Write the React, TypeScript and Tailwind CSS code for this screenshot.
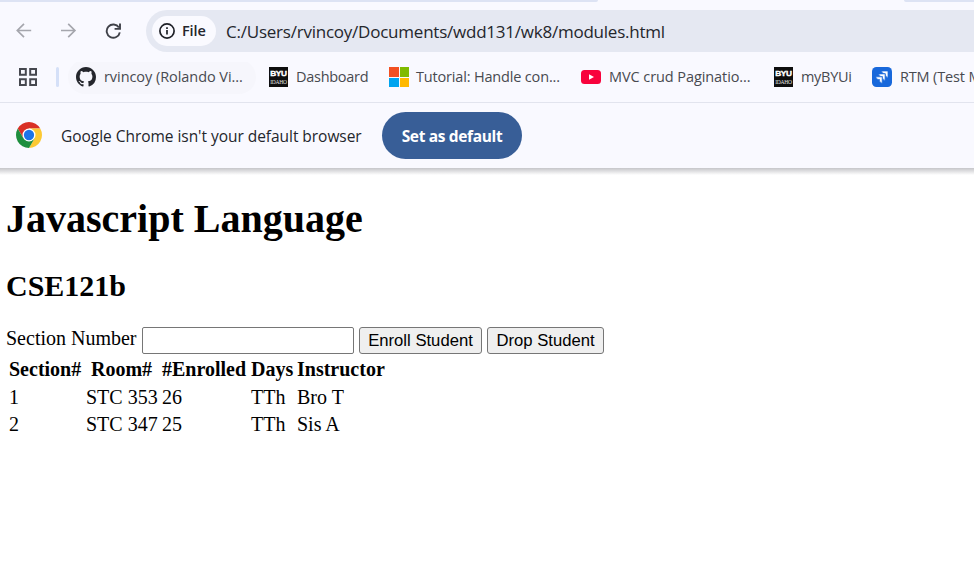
import type { ReactNode } from "react";

function Bookmark({ icon, label, className }: { icon: ReactNode; label: string; className: string }) {
  return (
    <div className={`flex h-[34px] shrink-0 items-center whitespace-nowrap text-[14.5px] text-[#484a50] ${className}`}>
      {icon}
      <span>{label}</span>
    </div>
  );
}

function ByuIcon() {
  return (
    <svg className="h-5 w-[19px] shrink-0" viewBox="0 0 19 20">
      <rect width="19" height="20" fill="#0e0e0e" />
      <text x="1.2" y="9" textLength="16.6" lengthAdjust="spacingAndGlyphs" fill="#fff" stroke="#fff" strokeWidth="0.4" fontSize="8" className="font-['Liberation_Sans',sans-serif] font-bold">BYU</text>
      <text x="1.2" y="16.8" textLength="16.6" lengthAdjust="spacingAndGlyphs" fill="#e0e0e0" fontSize="6.6" className="font-['Liberation_Serif',serif]">IDAHO</text>
    </svg>
  );
}

function GithubIcon() {
  return (
    <svg className="size-5 shrink-0" viewBox="0 0 16 16" fill="#24262c">
      <path d="M8 0C3.58 0 0 3.58 0 8c0 3.54 2.29 6.53 5.47 7.59.4.07.55-.17.55-.38 0-.19-.01-.82-.01-1.49-2.01.37-2.53-.49-2.69-.94-.09-.23-.48-.94-.82-1.13-.28-.15-.68-.52-.01-.53.63-.01 1.08.58 1.23.82.72 1.21 1.87.87 2.33.66.07-.52.28-.87.51-1.07-1.78-.2-3.64-.89-3.64-3.95 0-.87.31-1.59.82-2.15-.08-.2-.36-1.02.08-2.12 0 0 .67-.21 2.2.82.64-.18 1.32-.27 2-.27s1.36.09 2 .27c1.53-1.04 2.2-.82 2.2-.82.44 1.1.16 1.92.08 2.12.51.56.82 1.27.82 2.15 0 3.07-1.87 3.75-3.65 3.95.29.25.54.73.54 1.48 0 1.07-.01 1.93-.01 2.2 0 .21.15.46.55.38A8.01 8.01 0 0 0 16 8c0-4.42-3.58-8-8-8" />
    </svg>
  );
}

function ChromeIcon() {
  return (
    <svg className="-mt-px size-[26px] shrink-0" viewBox="0 0 48 48">
      <path fill="#d93025" d="M24 12h20.78A24 24 0 0 0 3.22 12L13.6 30Z" />
      <path fill="#fcc934" d="M34.4 30 24 48A24 24 0 0 0 44.78 12H24Z" />
      <path fill="#1e8e3e" d="M13.6 30 3.22 12A24 24 0 0 0 24 48l10.4-18Z" />
      <circle cx="24" cy="24" r="12" fill="#fff" />
      <circle cx="24" cy="24" r="9.5" fill="#1a73e8" />
    </svg>
  );
}

const rows = [
  ["1", "STC 353", "26", "TTh", "Bro T"],
  ["2", "STC 347", "25", "TTh", "Sis A"],
];

export default function App() {
  return (
    <div className="h-[583px] w-[974px] overflow-hidden bg-white text-black">
      <div className="bg-[#f9f9ff] font-['Open_Sans','Noto_Sans',sans-serif]">
        <div className="flex h-[2px] justify-between">
          <div className="h-[2px] w-[598px] rounded-br-[3px] bg-[#dde3f4]" />
          <div className="h-[2px] w-[70px] rounded-bl-[3px] bg-[#dde3f4]" />
        </div>
        <header className="flex h-[60px] items-start pt-2 pl-4">
          <svg className="mt-[13px] h-4 w-4 shrink-0" viewBox="0 0 16 16" fill="none" stroke="#a5a6ad" strokeWidth="1.7">
            <path d="M15.2 7.5H1.4M8 .8 1.3 7.5 8 14.2" />
          </svg>
          <svg className="mt-[13px] ml-[29px] h-4 w-4 shrink-0" viewBox="0 0 16 16" fill="none" stroke="#a5a6ad" strokeWidth="1.7">
            <path d="M0 7.5h13.8M7.2.8l6.7 6.7-6.7 6.7" />
          </svg>
          <svg className="mt-[13px] ml-7 h-4 w-4 shrink-0" viewBox="0 0 16 16" fill="none" stroke="#404249" strokeWidth="1.9">
            <path d="M13.9 4.6A6.6 6.6 0 1 0 14.8 9.3M15 .5v5.4H9.6" />
          </svg>
          <div className="ml-[25px] flex h-[42px] flex-1 items-center rounded-l-full bg-[#e5e8f2] pl-[6px]">
            <div className="flex h-[30px] w-16 items-center rounded-full bg-[#fafaff] pl-[7px]">
              <svg className="size-4" viewBox="0 0 16 16" fill="none" stroke="#1e2027" strokeWidth="1.7">
                <circle cx="8" cy="8" r="7.1" />
                <path d="M8 7v4.5M8 4.2v1.7" />
              </svg>
              <span className="-mt-px ml-[7px] text-[14.5px] font-semibold tracking-[-0.1px] text-[#24262c]">File</span>
            </div>
            <span className="mt-px ml-[10px] text-[17px] tracking-[-0.23px] whitespace-nowrap text-[#24262c]">
              C:/Users/rvincoy/Documents/wdd131/wk8/modules.html
            </span>
          </div>
        </header>
        <nav className="flex h-[41px] overflow-hidden border-b border-[#e2e4ee] pl-[19px]">
          <svg className="mt-[6px] h-[18px] w-[18px] shrink-0" viewBox="0 0 18 18" fill="none" stroke="#46484f" strokeWidth="2">
            <path d="M1 1h5.8v5.8H1zM11.2 1H17v5.8h-5.8zM1 11.2h5.8V17H1zM11.2 11.2H17V17h-5.8z" />
          </svg>
          <div className="mt-[5px] ml-[19px] h-5 w-[3px] shrink-0 rounded-full bg-[#d5e0f8]" />
          <Bookmark icon={<GithubIcon />} label="rvincoy (Rolando Vi..." className="-mt-[2px] ml-[9px] w-[188px] gap-2 rounded-full bg-[#f6f6fc] pl-2 tracking-[-0.06px]" />
          <Bookmark icon={<ByuIcon />} label="Dashboard" className="-mt-[2px] ml-[13px] w-[120px] gap-2 tracking-[-0.28px]" />
          <Bookmark
            icon={
              <span className="grid size-5 shrink-0 grid-cols-2 gap-px">
                <span className="bg-[#f25022]" />
                <span className="bg-[#7fba00]" />
                <span className="bg-[#00a4ef]" />
                <span className="bg-[#ffb900]" />
              </span>
            }
            label="Tutorial: Handle con..."
            className="-mt-[2px] w-[192px] gap-[7px] tracking-[-0.17px]"
          />
          <Bookmark
            icon={
              <svg className="h-[14px] w-5 shrink-0" viewBox="0 0 20 14">
                <rect width="20" height="14" rx="3.5" fill="#f8023c" />
                <path d="M8 4.2v5.6L13 7z" fill="#fff" />
              </svg>
            }
            label="MVC crud Paginatio..."
            className="-mt-[2px] w-[193px] gap-2 tracking-[-0.08px]"
          />
          <Bookmark icon={<ByuIcon />} label="myBYUi" className="-mt-[2px] w-[98px] gap-2 tracking-[-0.3px]" />
          <Bookmark
            icon={
              <svg className="size-5 shrink-0" viewBox="0 0 20 20">
                <rect width="20" height="20" rx="4.5" fill="#1868db" />
                <g fill="#fff" stroke="#1868db" strokeWidth="0.7">
                  <path d="M9.6 4H16v6.4a2.9 2.9 0 0 1-2.7-2.9v-.8h-.8A2.9 2.9 0 0 1 9.6 4" />
                  <path d="M6.7 6.9h6.4v6.4a2.9 2.9 0 0 1-2.7-2.9v-.8h-.8a2.9 2.9 0 0 1-2.9-2.7" />
                  <path d="M3.8 9.8h6.4v6.4a2.9 2.9 0 0 1-2.7-2.9v-.8h-.8a2.9 2.9 0 0 1-2.9-2.7" />
                </g>
              </svg>
            }
            label="RTM (Test M"
            className="-mt-[2px] gap-2 tracking-[-0.16px]"
          />
        </nav>
        <div className="flex h-[65px] items-center pl-4">
          <ChromeIcon />
          <span className="mt-[3px] ml-[19px] w-[321px] text-[15.5px] tracking-[-0.04px] whitespace-nowrap text-[#24262c]">
            Google Chrome isn't your default browser
          </span>
          <button className="h-[47px] w-[140px] rounded-full bg-[#385e97] pt-[3px] text-[15.5px] font-bold tracking-[-0.35px] whitespace-nowrap text-white">
            Set as default
          </button>
        </div>
      </div>
      <div className="h-[7px] bg-linear-to-b from-[#c6c6ca] to-white" />
      <main className="pl-[6px] font-['Liberation_Serif',serif] text-[20px] leading-[23px]">
        <h1 className="pt-[21px] text-[40px] leading-[46px] font-bold">Javascript Language</h1>
        <h2 className="mt-[26px] text-[30px] leading-[35px] font-bold">CSE121b</h2>
        <div className="mt-[23px] flex h-[28px] items-start">
          <label className="mt-px w-[136px] whitespace-nowrap">Section Number</label>
          <input className="mt-px h-[27px] w-[212px] rounded-[2px] border border-[#767676] bg-white" />
          <button className="mt-px ml-[5px] h-[27px] w-[123px] rounded-[3px] border border-[#767676] bg-[#efefef] font-['Liberation_Sans',sans-serif] text-[16.67px] whitespace-nowrap">Enroll Student</button>
          <button className="mt-px ml-[5px] h-[27px] w-[117px] rounded-[3px] border border-[#767676] bg-[#efefef] font-['Liberation_Sans',sans-serif] text-[16.67px] whitespace-nowrap">Drop Student</button>
        </div>
        <table className="mt-[2px] ml-[3px] w-[380px] table-fixed border-collapse text-left">
          <colgroup>
            <col className="w-[77px]" />
            <col className="w-[76px]" />
            <col className="w-[89px]" />
            <col className="w-[46px]" />
            <col className="w-[92px]" />
          </colgroup>
          <thead>
            <tr className="h-[27px]">
              <th>Section#</th>
              <th className="pl-[5px]">Room#</th>
              <th>#Enrolled</th>
              <th>Days</th>
              <th>Instructor</th>
            </tr>
          </thead>
          <tbody>
            {rows.map((row) => (
              <tr key={row[0]} className="h-[27px]">
                {row.map((cell, i) => (
                  <td key={i} className="pt-px whitespace-nowrap">{cell}</td>
                ))}
              </tr>
            ))}
          </tbody>
        </table>
      </main>
    </div>
  );
}
